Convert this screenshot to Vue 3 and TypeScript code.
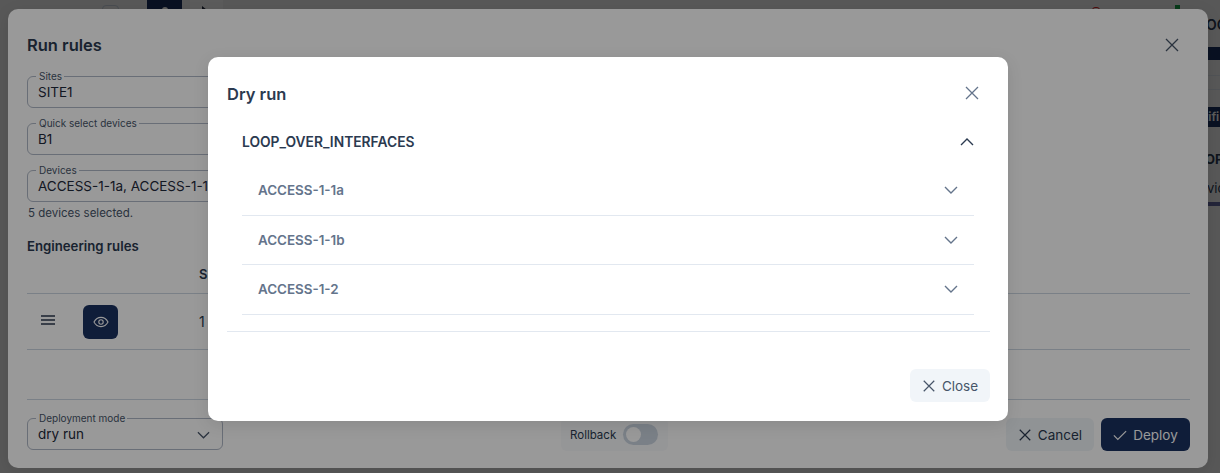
<script setup lang="ts">
const devices = ["ACCESS-1-1a", "ACCESS-1-1b", "ACCESS-1-2"]
</script>

<template>
  <div class="page">
    <div class="behind">
      <div class="top-row">
        <span class="ghost-box"></span>
        <span class="top-btn"><i></i></span>
        <span class="top-play"><i></i></span>
        <span class="top-spacer"></span>
        <span class="dot-red"></span>
        <span class="dot-green"></span>
      </div>
      <div class="side">
        <div class="side-title">DOC</div>
        <div class="side-bar"></div>
        <div class="side-line"></div>
        <div class="side-line second"></div>
        <div class="side-btn">tifi</div>
        <div class="side-bold">OP</div>
        <div class="side-text">vic</div>
        <div class="side-tab"></div>
      </div>
    </div>

    <div class="overlay">
      <section class="modal">
        <header class="modal-head">
          <h2>Run rules</h2>
          <svg class="icon x-dark" viewBox="0 0 16 16"><path d="M2 2l12 12M14 2L2 14" /></svg>
        </header>

        <div class="field">
          <span class="legend">Sites</span>
          <span class="value">SITE1</span>
        </div>
        <div class="field">
          <span class="legend">Quick select devices</span>
          <span class="value">B1</span>
        </div>
        <div class="field last">
          <span class="legend">Devices</span>
          <span class="value">ACCESS-1-1a, ACCESS-1-1b, ACCESS-1-2</span>
        </div>
        <p class="help">5 devices selected.</p>

        <h3>Engineering rules</h3>
        <div class="thead"><span>S</span></div>
        <div class="trow">
          <svg class="burger" viewBox="0 0 14 10"><path d="M0 1h14M0 5h14M0 9h14" /></svg>
          <span class="eye-btn">
            <svg viewBox="0 0 16 16"><path d="M1 8C2.600 5 5.100 3.400 8 3.400S13.400 5 15 8c-1.600 3-4.100 4.600-7 4.600S2.600 11 1 8z" /><circle cx="8" cy="8" r="2.200" /></svg>
          </span>
          <span class="cell">1</span>
        </div>
        <div class="tfoot"></div>

        <footer class="modal-foot">
          <div class="field mode">
            <span class="legend">Deployment mode</span>
            <span class="value">dry run</span>
            <svg class="chev-mode" viewBox="0 0 14 8"><path d="M1 1l6 6 6-6" /></svg>
          </div>
          <div class="rollback">
            <span>Rollback</span>
            <span class="toggle"><i></i></span>
          </div>
          <div class="actions">
            <button class="btn cancel">
              <svg viewBox="0 0 16 16"><path d="M2 2l12 12M14 2L2 14" /></svg>Cancel
            </button>
            <button class="btn deploy">
              <svg viewBox="0 0 16 16"><path d="M1 8.500l4.500 4.500L15 3.500" /></svg>Deploy
            </button>
          </div>
        </footer>
      </section>
    </div>

    <div class="overlay top">
      <section class="dialog">
        <header class="dialog-head">
          <h2>Dry run</h2>
          <svg class="icon x-light" viewBox="0 0 16 16"><path d="M2 2l12 12M14 2L2 14" /></svg>
        </header>

        <div class="accordion">
          <div class="acc-title">
            <span>LOOP_OVER_INTERFACES</span>
            <svg class="chev up" viewBox="0 0 14 8"><path d="M1 7l6-6 6 6" /></svg>
          </div>
          <div v-for="d in devices" :key="d" class="acc-row">
            <span>{{ d }}</span>
            <svg class="chev" viewBox="0 0 14 8"><path d="M1 1l6 6 6-6" /></svg>
          </div>
        </div>

        <footer class="dialog-foot">
          <button class="btn close">
            <svg viewBox="0 0 16 16"><path d="M2 2l12 12M14 2L2 14" /></svg>Close
          </button>
        </footer>
      </section>
    </div>
  </div>
</template>

<style>
html, body {
  margin: 0;
  height: 100%;
  overflow: hidden;
  background: #fff;
}
</style>

<style scoped>
* {
  box-sizing: border-box;
}

.page {
  position: relative;
  width: 1220px;
  height: 473px;
  overflow: hidden;
  background: #f6f6f6;
  font-family: Inter, "Noto Sans", sans-serif;
  color: #2b3a50;
}

.top-row {
  display: flex;
  height: 9px;
  align-items: flex-start;
  padding-left: 102px;
}

.ghost-box {
  width: 17px;
  height: 9px;
  margin-top: 5px;
  border: 1px solid #cbd5e1;
  border-radius: 4px 4px 0 0;
}

.top-btn {
  display: flex;
  justify-content: center;
  width: 35px;
  height: 9px;
  margin-left: 28px;
  padding-top: 7px;
  background: #1a3160;
}

.top-btn i {
  width: 6px;
  height: 6px;
  border-radius: 50%;
  background: #fff;
}

.top-play {
  width: 33px;
  height: 9px;
  margin-left: 8px;
  padding: 6px 0 0 12px;
  background: #fff;
}

.top-play i {
  display: block;
  width: 0;
  height: 0;
  border-left: 5px solid #1e293b;
  border-top: 4px solid transparent;
  border-bottom: 4px solid transparent;
}

.top-spacer {
  flex: 1;
}

.dot-red {
  width: 8px;
  height: 9px;
  margin-top: 7px;
  border: 1px solid #dc2626;
  border-radius: 3px 3px 0 0;
}

.dot-green {
  width: 5px;
  height: 9px;
  margin: 5px 40px 0 75px;
  background: #16a34a;
}

.side {
  margin-left: 1208px;
  overflow: hidden;
  white-space: nowrap;
  font-size: 14px;
}

.side-title {
  margin-top: 7px;
  font-weight: 600;
  font-size: 14px;
  line-height: 18px;
  text-indent: -12px;
}

.side-bar {
  height: 13px;
  margin-top: 13px;
  background: #1a3160;
}

.side-line {
  height: 1px;
  margin-top: 15px;
  background: #e2e8f0;
}

.side-line.second {
  margin-top: 13px;
}

.side-btn {
  height: 20px;
  margin-top: 17px;
  background: #1a3160;
  color: #fff;
  font-size: 12px;
  font-weight: 600;
  line-height: 20px;
  text-indent: -4px;
}

.side-bold {
  margin-top: 23px;
  font-size: 13px;
  font-weight: 700;
  line-height: 18px;
  text-indent: -3px;
}

.side-text {
  margin-top: 11px;
  font-size: 13px;
  line-height: 18px;
  text-indent: -1px;
}

.side-tab {
  height: 4px;
  margin-top: 5px;
  background: #6366a0;
}

.overlay {
  position: absolute;
  inset: 0;
  display: flex;
  justify-content: center;
  align-items: flex-start;
  padding: 9px 4px 0 0;
  background: rgba(0, 0, 0, 0.4);
}

.overlay.top {
  padding-top: 57px;
}

.modal {
  display: flex;
  flex-direction: column;
  width: 1200px;
  height: 459px;
  padding: 0 18px 0 19px;
  background: #fff;
  border-radius: 10px;
  box-shadow: 0 4px 16px rgba(0, 0, 0, 0.1);
}

.modal-head {
  display: flex;
  height: 67px;
  align-items: center;
  justify-content: space-between;
  padding-top: 5px;
}

h2 {
  margin: 0;
  font-size: 16.500px;
  font-weight: 600;
  line-height: 20px;
  color: #2b3a50;
}

.icon {
  width: 16px;
  height: 16px;
  fill: none;
  stroke: #475569;
  stroke-width: 1.300;
}

.x-dark {
  margin-right: 10px;
}

.field {
  position: relative;
  display: flex;
  align-items: center;
  width: 620px;
  height: 32px;
  margin-bottom: 15px;
  padding: 0 10px;
  border: 1px solid #b0b8c6;
  border-radius: 6px;
}

.field.last {
  margin-bottom: 3px;
}

.legend {
  position: absolute;
  top: -7px;
  left: 8px;
  padding: 0 2px 0 3px;
  background: #fff;
  font-size: 10px;
  line-height: 12px;
  color: #475569;
}

.value {
  font-size: 13.500px;
  color: #1e293b;
  white-space: nowrap;
}

.help {
  margin: 0 0 0 1px;
  font-size: 11.500px;
  line-height: 17px;
  color: #475569;
}

h3 {
  margin: 15px 0 0;
  font-size: 13.200px;
  font-weight: 600;
  line-height: 18px;
  color: #2b3a50;
}

.thead {
  height: 39px;
  padding: 10px 0 0 172px;
  border-bottom: 1px solid #cbd5e1;
  font-size: 13px;
  font-weight: 600;
  line-height: 18px;
}

.trow {
  display: flex;
  align-items: center;
  height: 56px;
  padding-left: 14px;
  border-bottom: 1px solid #cbd5e1;
}

.burger {
  width: 14px;
  height: 10px;
  margin-top: -4px;
  fill: none;
  stroke: #2b3a50;
  stroke-width: 1.300;
}

.eye-btn {
  display: flex;
  align-items: center;
  justify-content: center;
  width: 35px;
  height: 34px;
  margin-left: 28px;
  border-radius: 6px;
  background: #1a3160;
}

.eye-btn svg {
  width: 16px;
  height: 16px;
  fill: none;
  stroke: #fff;
  stroke-width: 1.100;
}

.cell {
  margin-left: 81px;
  font-size: 14px;
}

.tfoot {
  height: 50px;
  flex: none;
  border-bottom: 1px solid #cbd5e1;
}

.modal-foot {
  display: flex;
  align-items: flex-start;
  justify-content: space-between;
  padding-top: 18px;
}

.field.mode {
  width: 196px;
  margin: 0;
}

.chev-mode {
  position: absolute;
  right: 12px;
  top: 12px;
  width: 13px;
  height: 8px;
  fill: none;
  stroke: #475569;
  stroke-width: 1.300;
}

.rollback {
  display: flex;
  align-items: center;
  gap: 7px;
  width: 107px;
  height: 33px;
  padding: 0 9px;
  border-radius: 6px;
  background: #f8fafc;
  font-size: 11.500px;
  color: #2b3a50;
}

.toggle {
  display: block;
  width: 35px;
  height: 21px;
  padding: 3px;
  border-radius: 11px;
  background: #cbd5e1;
}

.toggle i {
  display: block;
  width: 15px;
  height: 15px;
  border-radius: 50%;
  background: #fff;
}

.actions {
  display: flex;
  gap: 7px;
}

.btn {
  display: inline-flex;
  align-items: center;
  justify-content: center;
  gap: 6px;
  height: 33px;
  padding: 0;
  border: 0;
  border-radius: 6px;
  font-family: inherit;
  font-size: 13.500px;
}

.btn svg {
  width: 14px;
  height: 14px;
  fill: none;
  stroke: currentColor;
  stroke-width: 1.400;
}

.cancel {
  width: 88px;
  background: #f1f5f9;
  color: #2b3a50;
}

.deploy {
  width: 89px;
  background: #1a3160;
  color: #fff;
}

.dialog {
  display: flex;
  flex-direction: column;
  width: 800px;
  height: 364px;
  padding: 0 18px 0 19px;
  background: #fff;
  border-radius: 10px;
  box-shadow: 0 4px 16px rgba(0, 0, 0, 0.1);
}

.dialog-head {
  display: flex;
  height: 73px;
  align-items: center;
  justify-content: space-between;
}

.x-light {
  margin-right: 10px;
  margin-top: -1px;
  stroke: #64748b;
}

.accordion {
  display: flex;
  flex-direction: column;
  height: 202px;
  padding: 0 16px 0 15px;
  border-bottom: 1px solid #e2e8f0;
}

.acc-title {
  display: flex;
  align-items: center;
  justify-content: space-between;
  height: 24px;
  flex: none;
  font-size: 13.800px;
  font-weight: 600;
  color: #2b3a50;
}

.acc-row {
  display: flex;
  align-items: center;
  justify-content: space-between;
  height: 49.500px;
  flex: none;
  padding: 0 16px;
  border-bottom: 1px solid #e2e8f0;
  font-size: 13.400px;
  font-weight: 600;
  color: #64748b;
}

.acc-title + .acc-row {
  height: 61.500px;
  padding-top: 11px;
}

.chev {
  width: 14px;
  height: 8px;
  fill: none;
  stroke: #64748b;
  stroke-width: 1.400;
}

.chev.up {
  stroke: #2b3a50;
}

.dialog-foot {
  display: flex;
  justify-content: flex-end;
  padding-top: 37px;
}

.close {
  width: 80px;
  background: #f1f5f9;
  color: #475569;
}
</style>
